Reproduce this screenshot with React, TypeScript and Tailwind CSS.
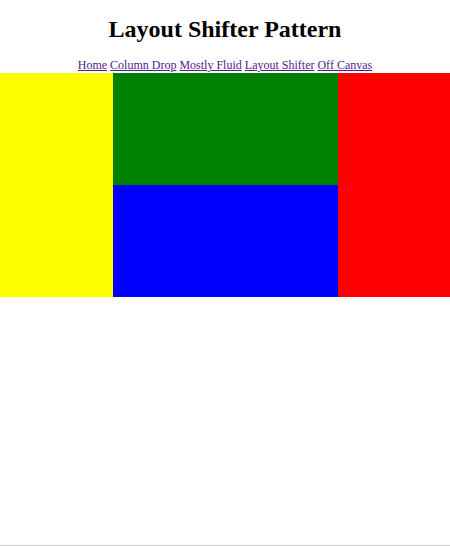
const links = ['Home', 'Column Drop', 'Mostly Fluid', 'Layout Shifter', 'Off Canvas'];

export default function App() {
  return (
    <div className="flex h-[546px] flex-col border-b border-[#c6c6c6] bg-white font-['Liberation_Serif',serif] text-black">
      <h1 className="pt-4 text-center text-[24px] font-bold leading-[27.6px]">Layout Shifter Pattern</h1>

      <nav className="mt-[15.6px] text-center text-[12px] leading-[13.8px]">
        {links.map((label, i) => (
          <span key={label}>
            <a href="#" className="text-[#551a8b] underline">
              {label}
            </a>
            {i < links.length - 1 ? ' ' : null}
          </span>
        ))}
      </nav>

      <div className="flex">
        <div className="w-1/4 bg-[#ffff00]" />
        <div className="flex w-1/2 flex-col">
          <div className="h-[112px] bg-[#008000]" />
          <div className="h-[112px] bg-[#0000ff]" />
        </div>
        <div className="w-1/4 bg-[#ff0000]" />
      </div>
    </div>
  );
}
